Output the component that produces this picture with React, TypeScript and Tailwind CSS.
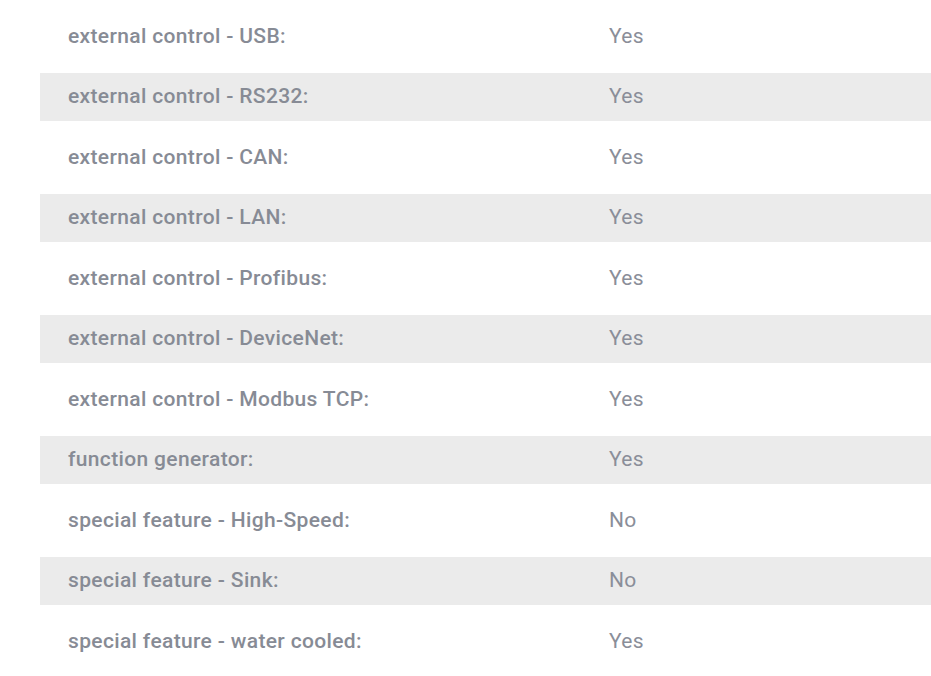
import React from "react";

const rows: [string, string][] = [
  ["external control - USB:", "Yes"],
  ["external control - RS232:", "Yes"],
  ["external control - CAN:", "Yes"],
  ["external control - LAN:", "Yes"],
  ["external control - Profibus:", "Yes"],
  ["external control - DeviceNet:", "Yes"],
  ["external control - Modbus TCP:", "Yes"],
  ["function generator:", "Yes"],
  ["special feature - High-Speed:", "No"],
  ["special feature - Sink:", "No"],
  ["special feature - water cooled:", "Yes"],
];

export default function App() {
  return (
    <div
      className="w-[931px] h-[676px] bg-white overflow-hidden pl-[40px] pt-[12.5px]"
      style={{ fontFamily: "Roboto, 'Liberation Sans', sans-serif" }}
    >
      <div className="flex flex-col gap-[12.5px]">
        {rows.map(([k, v], i) => (
          <div
            key={i}
            className={`flex items-center h-[48px] pl-[28px] ${i % 2 === 1 ? "bg-[#ebebeb]" : ""}`}
          >
            <div className="w-[541px] text-[21px] tracking-[0.35px] font-medium text-[#878b95]">{k}</div>
            <div className="text-[21px] tracking-[0.35px] text-[#8a8e99]">{v}</div>
          </div>
        ))}
      </div>
    </div>
  );
}
